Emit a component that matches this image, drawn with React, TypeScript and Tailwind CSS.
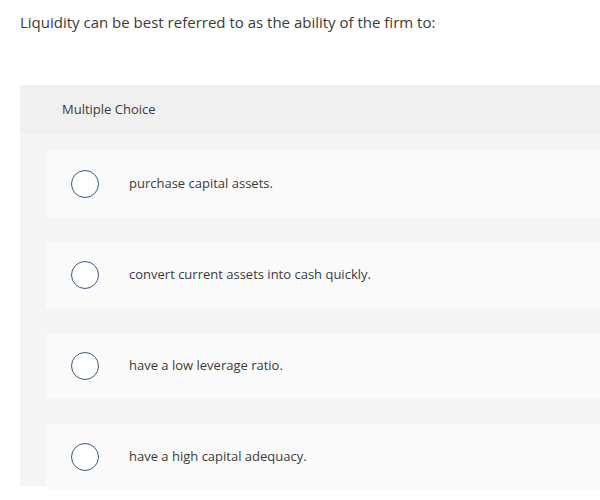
const OPTIONS = [
  "purchase capital assets.",
  "convert current assets into cash quickly.",
  "have a low leverage ratio.",
  "have a high capital adequacy.",
];

export default function App() {
  return (
    <div className="w-[600px] h-[500px] bg-white overflow-hidden font-['Open_Sans',sans-serif] text-[#3b3b3b]">
      <p className="pl-5 pt-[12px] text-[15px] leading-[20px]">
        Liquidity can be best referred to as the ability of the firm to:
      </p>

      <div className="ml-5 mt-[53px] h-[401px] bg-[#f5f5f5]">
        <div className="h-[49px] bg-[#f0f0f0] flex items-center pl-[42px] text-[13px]">
          Multiple Choice
        </div>
        <div className="pt-[17px] pl-[26px] flex flex-col gap-[25px]">
          {OPTIONS.map((opt) => (
            <div key={opt} className="h-[66px] bg-[#fafafa] flex items-center pl-[25px]">
              <span className="w-[28px] h-[28px] rounded-full border-[1.5px] border-[#3d5a77] bg-white shrink-0" />
              <span className="ml-[30px] text-[13px]">{opt}</span>
            </div>
          ))}
        </div>
      </div>
    </div>
  );
}
